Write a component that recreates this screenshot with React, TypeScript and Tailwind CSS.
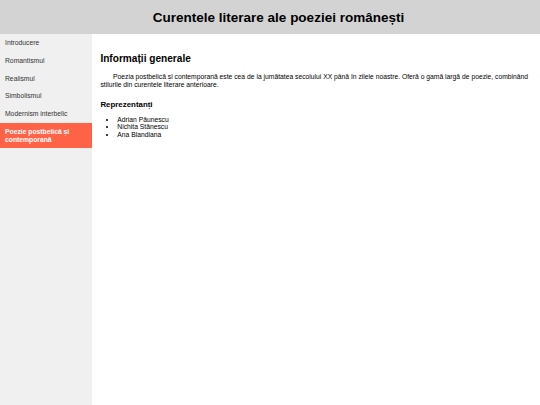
import React from "react";

const items = [
  "Introducere",
  "Romantismul",
  "Realismul",
  "Simbolismul",
  "Modernism interbelic",
  "Poezie postbelică și contemporană",
];

export default function App() {
  return (
    <div
      className="flex h-[405px] w-[540px] flex-col overflow-hidden bg-white text-black"
      style={{ fontFamily: '"Liberation Sans", Arial, sans-serif' }}
    >
      <header className="flex h-[34px] shrink-0 items-center justify-center bg-[#d3d3d3] pl-[17px] pt-[1px]">
        <h1 className="text-[13.5px] font-bold leading-[15.5px]">
          Curentele literare ale poeziei românești
        </h1>
      </header>
      <div className="flex flex-1">
        <nav className="w-[92px] shrink-0 bg-[#f0f0f0]">
          <ul>
            {items.map((it, i) => (
              <li
                key={it}
                className={
                  i === items.length - 1
                    ? "bg-[#ff6347] px-[5px] py-[5px] text-[6.75px] font-bold leading-[7.7px] text-white"
                    : "px-[5px] py-[5px] text-[6.75px] leading-[7.8px] text-[#333]"
                }
              >
                {it}
              </li>
            ))}
          </ul>
        </nav>
        <main className="flex-1 px-[8.4px] pt-[18.5px]">
          <h2 className="text-[10.125px] font-bold leading-[11.6px]">Informații generale</h2>
          <p className="mt-[9px] indent-[12.66px] text-[6.75px] leading-[7.8px]">
            Poezia postbelică și contemporană este cea de la jumătatea secolului XX până în zilele noastre. Oferă o gamă largă de poezie, combinând stilurile din curentele literare anterioare.
          </p>
          <h3 className="mt-[11.5px] text-[7.9px] font-bold leading-[9.1px]">Reprezentanți</h3>
          <ul className="mt-[6.6px] list-disc pl-[16.9px] text-[6.75px] leading-[7.6px]">
            <li>Adrian Păunescu</li>
            <li>Nichita Stănescu</li>
            <li>Ana Blandiana</li>
          </ul>
        </main>
      </div>
    </div>
  );
}
